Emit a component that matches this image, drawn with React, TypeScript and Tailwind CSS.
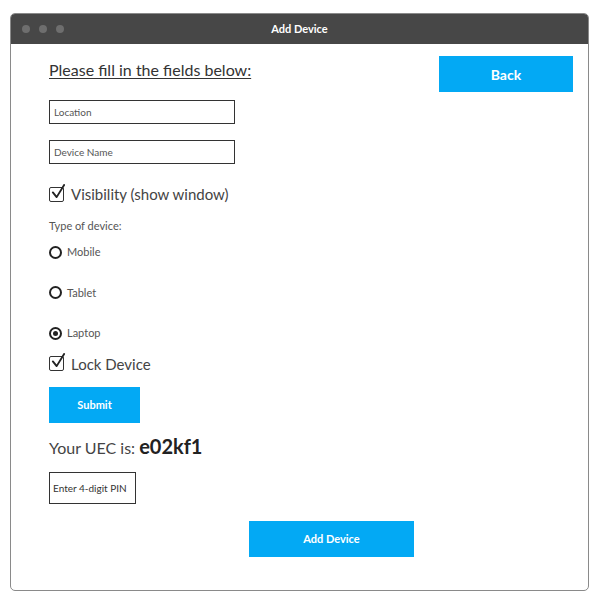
import React from 'react'

const Radio = ({ label, checked }: { label: string; checked?: boolean }) => (
    <label className="flex items-center gap-[5px] text-[11px] text-[#555]">
        <span className="flex size-[13px] items-center justify-center rounded-full border-[2px] border-[#222]">
            {checked && <span className="size-[5px] rounded-full bg-[#222]" />}
        </span>
        {label}
    </label>
)

const Check = ({ label }: { label: string }) => (
    <label className="flex items-center gap-[7px] text-[15px] text-[#444]">
        <span className="relative size-[15px] rounded-[2px] border-[1.5px] border-[#333]">
            <svg viewBox="0 0 16 16" className="absolute -top-[4px] left-[1px] size-[15px]" fill="none">
                <path d="M2 9 L6 14 L14 1" stroke="#222" strokeWidth="2" strokeLinecap="round" strokeLinejoin="round" />
            </svg>
        </span>
        {label}
    </label>
)

const App = () => {
    return (
        <div className="h-[597px] w-[603px] bg-white pl-[10px] pr-[14px] pt-[13px] font-['Lato',sans-serif]">
            <div className="flex h-[578px] flex-col overflow-hidden rounded-[5px] border border-[#8a8a8a]">
                <header className="relative flex h-[30px] items-center justify-center bg-[#474747]">
                    <div className="absolute left-[11px] flex gap-[9px]">
                        <span className="size-[8px] rounded-full bg-[#6e6e6e]" />
                        <span className="size-[8px] rounded-full bg-[#6e6e6e]" />
                        <span className="size-[8px] rounded-full bg-[#6e6e6e]" />
                    </div>
                    <h1 className="text-[11px] font-bold text-white">Add Device</h1>
                </header>
                <div className="relative flex flex-1 flex-col pl-[38px]">
                    <button className="absolute right-[15px] top-[12px] h-[36px] w-[134px] bg-[#03a9f4] text-[14px] font-bold text-white">
                        Back
                    </button>
                    <p className="mt-[16px] text-[16px] leading-[20px] text-[#333] underline underline-offset-2">
                        Please fill in the fields below:
                    </p>
                    <input
                        placeholder="Location"
                        className="mt-[20px] h-[24px] w-[186px] border-[1.5px] border-[#333] px-[4px] text-[10px] placeholder:text-[#555]"
                    />
                    <input
                        placeholder="Device Name"
                        className="mt-[16px] h-[24px] w-[186px] border-[1.5px] border-[#333] px-[4px] text-[10px] placeholder:text-[#555]"
                    />
                    <div className="mt-[19px]">
                        <Check label="Visibility (show window)" />
                    </div>
                    <p className="mt-[12px] text-[11px] text-[#555]">Type of device:</p>
                    <div className="mt-[10px] flex flex-col gap-[24px]">
                        <Radio label="Mobile" />
                        <Radio label="Tablet" />
                        <Radio label="Laptop" checked />
                    </div>
                    <div className="mt-[11px]">
                        <Check label="Lock Device" />
                    </div>
                    <button className="mt-[12px] h-[36px] w-[91px] bg-[#03a9f4] text-[11px] font-bold text-white">
                        Submit
                    </button>
                    <p className="mt-[8px] flex items-baseline gap-[4px] text-[16px] text-[#444]">
                        Your UEC is: <span className="text-[20px] font-bold text-[#222]">e02kf1</span>
                    </p>
                    <input
                        placeholder="Enter 4-digit PIN"
                        className="mt-[11px] h-[32px] w-[87px] border-[1.5px] border-[#333] px-[3px] text-[10px] placeholder:text-[#333]"
                    />
                    <button className="ml-[200px] mt-[17px] h-[36px] w-[165px] bg-[#03a9f4] text-[11px] font-bold text-white">
                        Add Device
                    </button>
                </div>
            </div>
        </div>
    )
}

export default App
